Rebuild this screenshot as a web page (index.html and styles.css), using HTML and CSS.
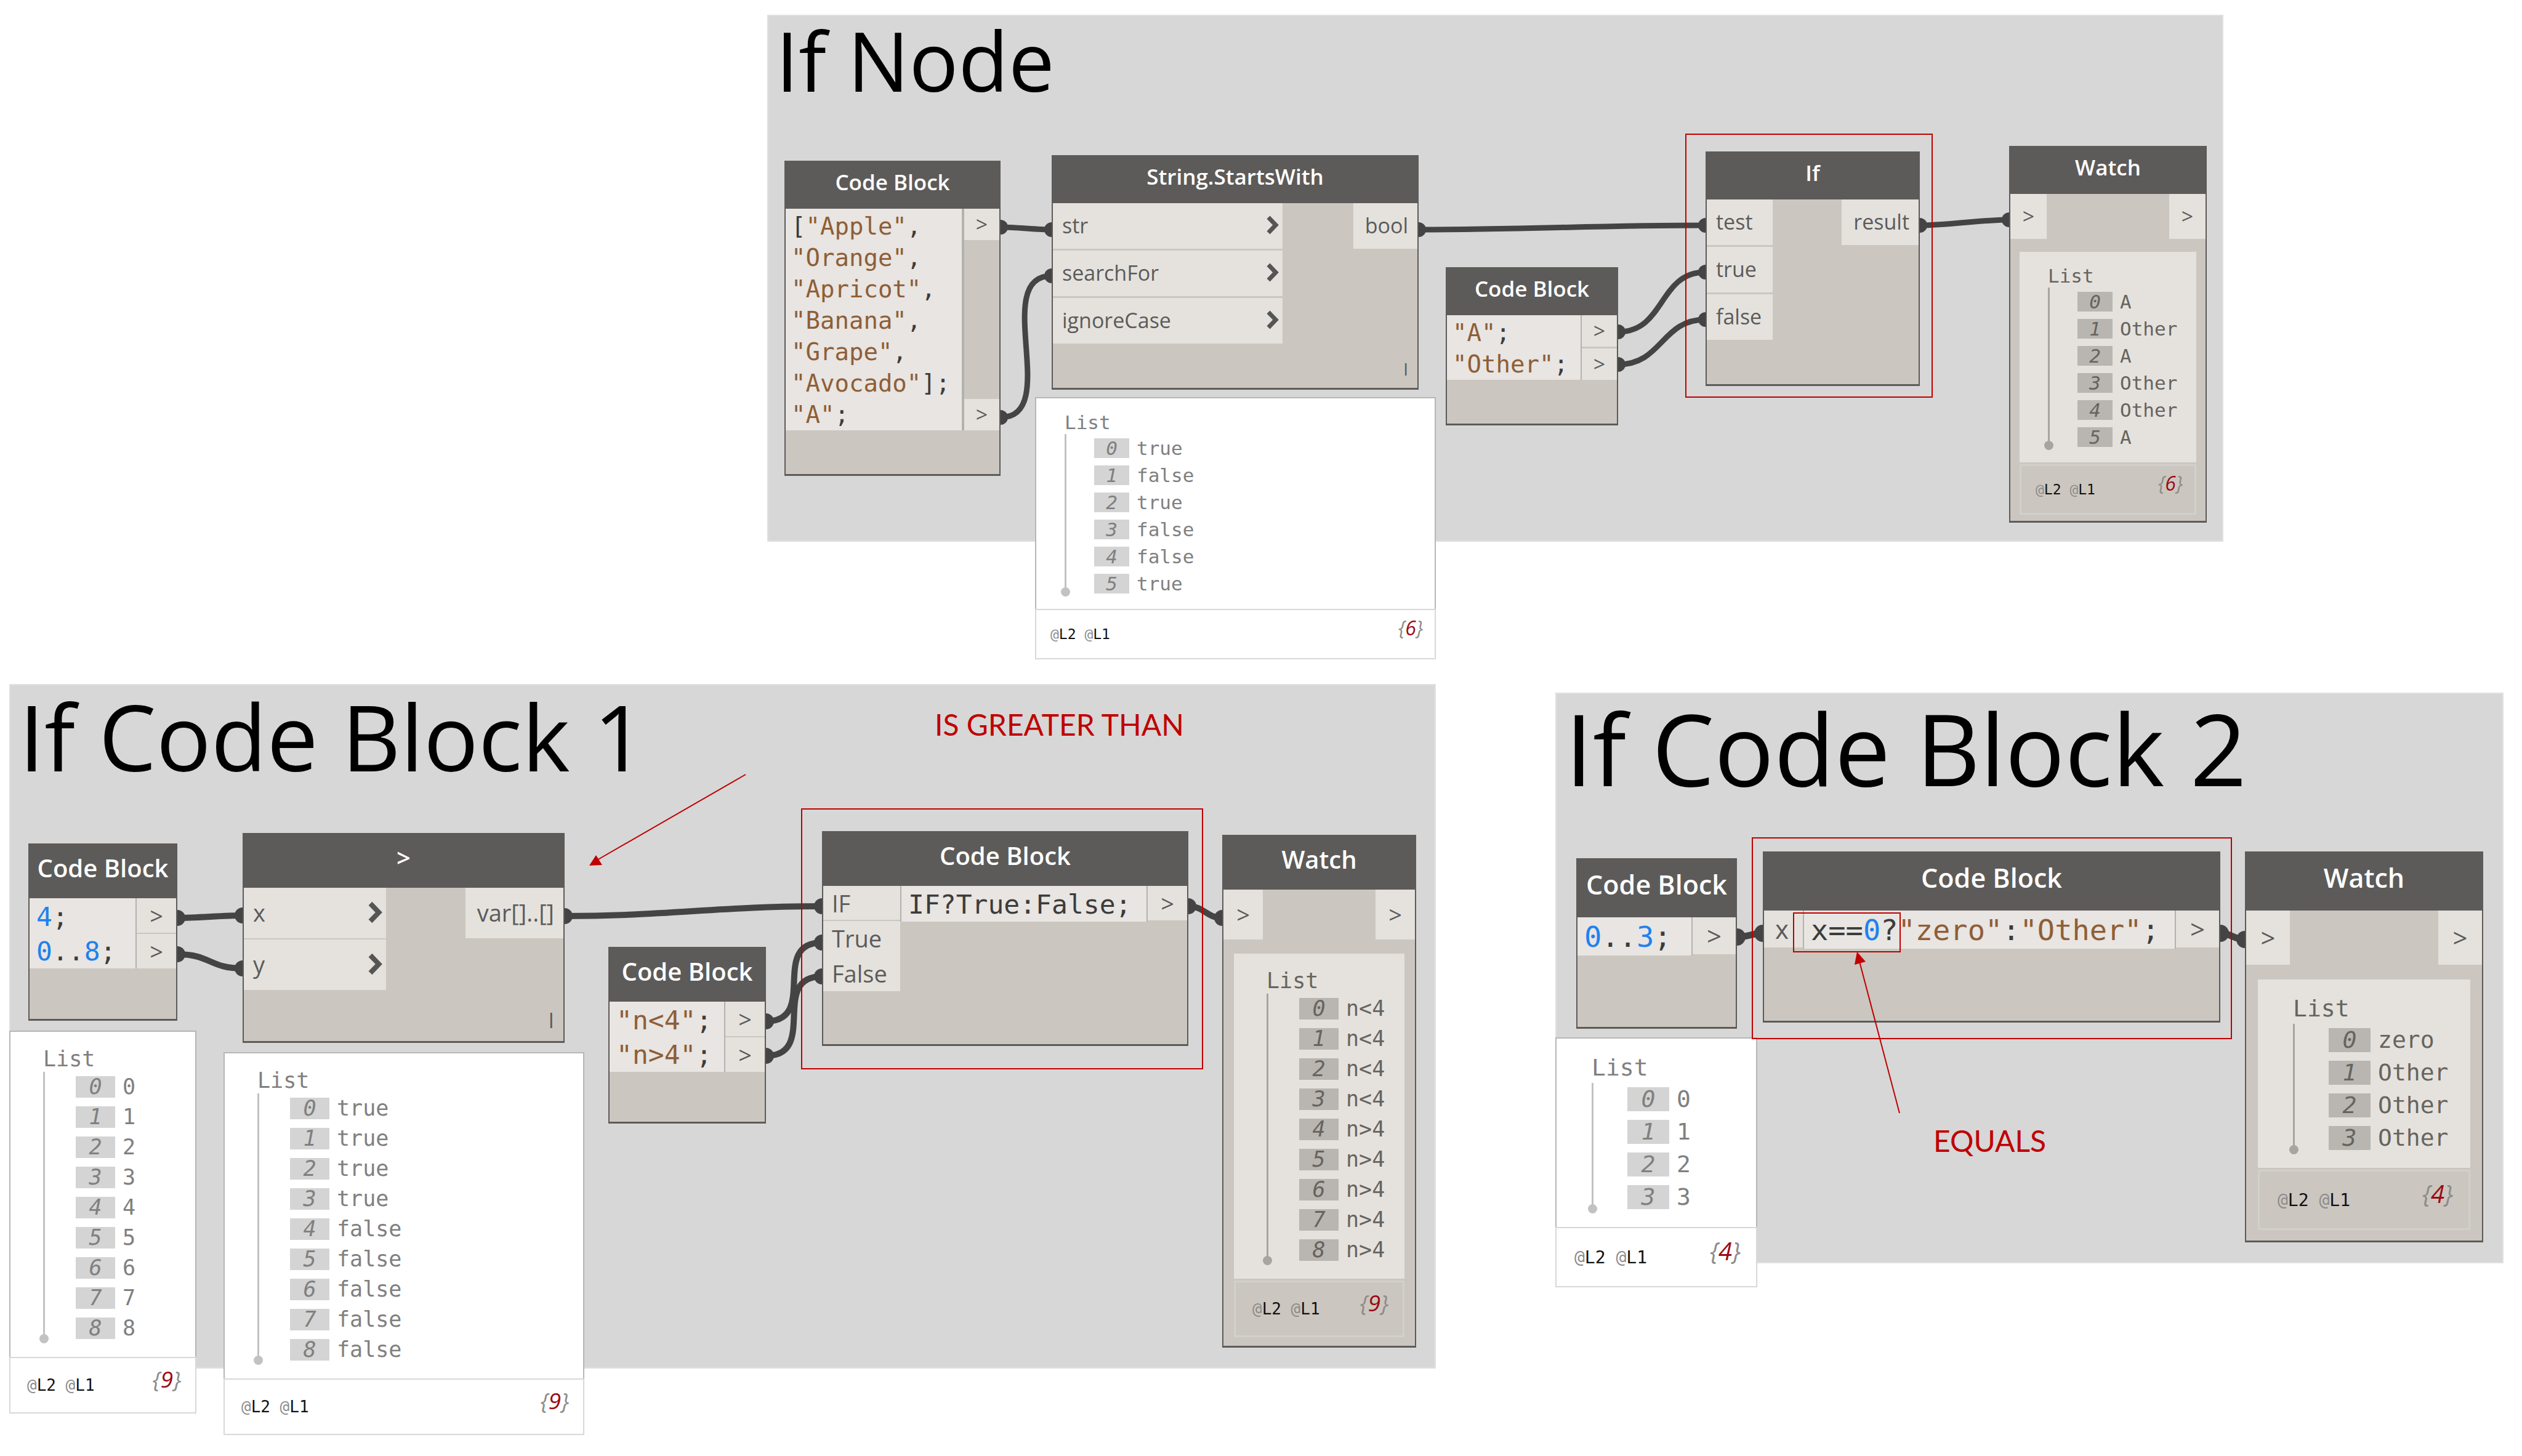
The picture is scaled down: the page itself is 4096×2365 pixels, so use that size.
FILE: index.html
```html
<!DOCTYPE html>
<html lang="en">
<head>
<meta charset="utf-8">
<title>If Node and Code Block graphs</title>
<link rel="stylesheet" href="styles.css">
</head>
<body>
<main class="canvas">

  <section class="group group-node scale-s"><h1 class="group-title">If Node</h1></section>
  <section class="group group-block1 scale-m"><h1 class="group-title">If Code Block 1</h1></section>
  <section class="group group-block2 scale-l"><h1 class="group-title">If Code Block 2</h1></section>

  <svg class="layer wires" aria-hidden="true">
    <g stroke-width="9">
      <path d="M1625 369C1650 369 1683 373 1708 373"/>
      <path d="M1625 678C1725 678 1608 448 1708 448"/>
      <path d="M2304 373C2480 373 2590 366 2770 366"/>
      <path d="M2628 539C2705 539 2693 442 2770 442"/>
      <path d="M2628 592C2700 592 2698 519 2770 519"/>
      <path d="M3118 366C3165 366 3215 357 3263 357"/>
    </g>
    <g stroke-width="10">
      <path d="M288 1491C322 1491 360 1487 394 1487"/>
      <path d="M288 1550C342 1550 340 1573 394 1573"/>
      <path d="M917 1488C1080 1488 1170 1472 1335 1472"/>
      <path d="M1244 1659C1330 1659 1249 1531 1335 1531"/>
      <path d="M1244 1715C1330 1715 1249 1586 1335 1586"/>
      <path d="M1930 1472C1955 1472 1960 1491 1985 1491"/>
    </g>
    <g stroke-width="11">
      <path d="M2821 1522C2838 1522 2846 1516 2863 1516"/>
      <path d="M3606 1516C3624 1516 3628 1526 3646 1526"/>
    </g>
    <g class="ends">
      <circle cx="1625" cy="369" r="12"/><circle cx="1708" cy="373" r="12"/>
      <circle cx="1625" cy="678" r="12"/><circle cx="1708" cy="448" r="12"/>
      <circle cx="2304" cy="373" r="12"/><circle cx="2770" cy="366" r="12"/>
      <circle cx="2628" cy="539" r="12"/><circle cx="2770" cy="442" r="12"/>
      <circle cx="2628" cy="592" r="12"/><circle cx="2770" cy="519" r="12"/>
      <circle cx="3118" cy="366" r="12"/><circle cx="3263" cy="357" r="12"/>
      <circle cx="288" cy="1491" r="13"/><circle cx="394" cy="1487" r="13"/>
      <circle cx="288" cy="1550" r="13"/><circle cx="394" cy="1573" r="13"/>
      <circle cx="917" cy="1488" r="13"/><circle cx="1335" cy="1472" r="13"/>
      <circle cx="1244" cy="1659" r="13"/><circle cx="1335" cy="1531" r="13"/>
      <circle cx="1244" cy="1715" r="13"/><circle cx="1335" cy="1586" r="13"/>
      <circle cx="1930" cy="1472" r="13"/><circle cx="1985" cy="1491" r="13"/>
      <circle cx="2821" cy="1522" r="14"/><circle cx="2863" cy="1516" r="14"/>
      <circle cx="3606" cy="1516" r="14"/><circle cx="3646" cy="1526" r="14"/>
    </g>
  </svg>

  <!-- If Node graph -->
  <article class="node node-fruit scale-s">
    <h2 class="node-head">Code Block</h2>
    <div class="node-body">
      <pre class="code code-wide"><code>[<i>"Apple"</i>,
<i>"Orange"</i>,
<i>"Apricot"</i>,
<i>"Banana"</i>,
<i>"Grape"</i>,
<i>"Avocado"</i>];
<i>"A"</i>;</code></pre>
      <div class="outs"><span class="pin">&gt;</span><span class="pin">&gt;</span></div>
    </div>
  </article>

  <article class="node node-starts scale-s">
    <h2 class="node-head">String.StartsWith</h2>
    <div class="node-body">
      <ul class="ins">
        <li class="port">str<svg class="chevron" viewBox="0 0 20 31"><path d="M3 3L15 15.500L3 28"/></svg></li>
        <li class="port">searchFor<svg class="chevron" viewBox="0 0 20 31"><path d="M3 3L15 15.500L3 28"/></svg></li>
        <li class="port">ignoreCase<svg class="chevron" viewBox="0 0 20 31"><path d="M3 3L15 15.500L3 28"/></svg></li>
      </ul>
      <span class="port out">bool</span>
    </div>
    <span class="lacing">I</span>
  </article>

  <article class="preview preview-starts scale-s">
    <div class="tree">
      <p class="tree-head">List</p>
      <div class="branch"><span class="rail"></span>
        <ul class="items">
          <li><i>0</i>true</li><li><i>1</i>false</li><li><i>2</i>true</li>
          <li><i>3</i>false</li><li><i>4</i>false</li><li><i>5</i>true</li>
        </ul>
      </div>
    </div>
    <footer class="levels"><span>@<b>L2</b> @<b>L1</b></span><em class="count">{<b>6</b>}</em></footer>
  </article>

  <article class="node node-other scale-s">
    <h2 class="node-head">Code Block</h2>
    <div class="node-body">
      <pre class="code"><code><i>"A"</i>;
<i>"Other"</i>;</code></pre>
      <div class="outs"><span class="pin">&gt;</span><span class="pin">&gt;</span></div>
    </div>
  </article>

  <article class="node node-if scale-s">
    <h2 class="node-head">If</h2>
    <div class="node-body">
      <ul class="ins">
        <li class="port">test</li>
        <li class="port">true</li>
        <li class="port">false</li>
      </ul>
      <span class="port out">result</span>
    </div>
  </article>

  <article class="node watch watch-s scale-s">
    <h2 class="node-head">Watch</h2>
    <div class="node-body"><span class="pin">&gt;</span><span class="pin">&gt;</span></div>
    <div class="tree">
      <p class="tree-head">List</p>
      <div class="branch"><span class="rail"></span>
        <ul class="items">
          <li><i>0</i>A</li><li><i>1</i>Other</li><li><i>2</i>A</li>
          <li><i>3</i>Other</li><li><i>4</i>Other</li><li><i>5</i>A</li>
        </ul>
      </div>
    </div>
    <footer class="levels"><span>@<b>L2</b> @<b>L1</b></span><em class="count">{<b>6</b>}</em></footer>
  </article>

  <!-- If Code Block 1 graph -->
  <article class="node node-range8 scale-m">
    <h2 class="node-head">Code Block</h2>
    <div class="node-body">
      <pre class="code"><code><b>4</b>;
<b>0</b>..<b>8</b>;</code></pre>
      <div class="outs"><span class="pin">&gt;</span><span class="pin">&gt;</span></div>
    </div>
  </article>

  <article class="preview preview-range8 scale-m">
    <div class="tree">
      <p class="tree-head">List</p>
      <div class="branch"><span class="rail"></span>
        <ul class="items">
          <li><i>0</i>0</li><li><i>1</i>1</li><li><i>2</i>2</li>
          <li><i>3</i>3</li><li><i>4</i>4</li><li><i>5</i>5</li>
          <li><i>6</i>6</li><li><i>7</i>7</li><li><i>8</i>8</li>
        </ul>
      </div>
    </div>
    <footer class="levels"><span>@<b>L2</b> @<b>L1</b></span><em class="count">{<b>9</b>}</em></footer>
  </article>

  <article class="node node-greater scale-m">
    <h2 class="node-head">&gt;</h2>
    <div class="node-body">
      <ul class="ins">
        <li class="port">x<svg class="chevron" viewBox="0 0 20 31"><path d="M3 3L15 15.500L3 28"/></svg></li>
        <li class="port">y<svg class="chevron" viewBox="0 0 20 31"><path d="M3 3L15 15.500L3 28"/></svg></li>
      </ul>
      <span class="port out">var[]..[]</span>
    </div>
    <span class="lacing">I</span>
  </article>

  <article class="preview preview-greater scale-m">
    <div class="tree">
      <p class="tree-head">List</p>
      <div class="branch"><span class="rail"></span>
        <ul class="items">
          <li><i>0</i>true</li><li><i>1</i>true</li><li><i>2</i>true</li>
          <li><i>3</i>true</li><li><i>4</i>false</li><li><i>5</i>false</li>
          <li><i>6</i>false</li><li><i>7</i>false</li><li><i>8</i>false</li>
        </ul>
      </div>
    </div>
    <footer class="levels"><span>@<b>L2</b> @<b>L1</b></span><em class="count">{<b>9</b>}</em></footer>
  </article>

  <article class="node node-n4 scale-m">
    <h2 class="node-head">Code Block</h2>
    <div class="node-body">
      <pre class="code"><code><i>"n&lt;4"</i>;
<i>"n&gt;4"</i>;</code></pre>
      <div class="outs"><span class="pin">&gt;</span><span class="pin">&gt;</span></div>
    </div>
  </article>

  <article class="node node-ternary scale-m">
    <h2 class="node-head">Code Block</h2>
    <div class="node-body">
      <ul class="names">
        <li>IF</li>
        <li>True</li>
        <li>False</li>
      </ul>
      <pre class="code code-inner"><code>IF?True:False;</code></pre>
      <div class="outs"><span class="pin">&gt;</span></div>
    </div>
  </article>

  <article class="node watch watch-m scale-m">
    <h2 class="node-head">Watch</h2>
    <div class="node-body"><span class="pin">&gt;</span><span class="pin">&gt;</span></div>
    <div class="tree">
      <p class="tree-head">List</p>
      <div class="branch"><span class="rail"></span>
        <ul class="items">
          <li><i>0</i>n&lt;4</li><li><i>1</i>n&lt;4</li><li><i>2</i>n&lt;4</li>
          <li><i>3</i>n&lt;4</li><li><i>4</i>n&gt;4</li><li><i>5</i>n&gt;4</li>
          <li><i>6</i>n&gt;4</li><li><i>7</i>n&gt;4</li><li><i>8</i>n&gt;4</li>
        </ul>
      </div>
    </div>
    <footer class="levels"><span>@<b>L2</b> @<b>L1</b></span><em class="count">{<b>9</b>}</em></footer>
  </article>

  <!-- If Code Block 2 graph -->
  <article class="node node-range3 scale-l">
    <h2 class="node-head">Code Block</h2>
    <div class="node-body">
      <pre class="code"><code><b>0</b>..<b>3</b>;</code></pre>
      <div class="outs"><span class="pin">&gt;</span></div>
    </div>
  </article>

  <article class="preview preview-range3 scale-l">
    <div class="tree">
      <p class="tree-head">List</p>
      <div class="branch"><span class="rail"></span>
        <ul class="items">
          <li><i>0</i>0</li><li><i>1</i>1</li><li><i>2</i>2</li><li><i>3</i>3</li>
        </ul>
      </div>
    </div>
    <footer class="levels"><span>@<b>L2</b> @<b>L1</b></span><em class="count">{<b>4</b>}</em></footer>
  </article>

  <article class="node node-equals scale-l">
    <h2 class="node-head">Code Block</h2>
    <div class="node-body">
      <ul class="names">
        <li>x</li>
      </ul>
      <pre class="code code-inner"><code>x==<b>0</b>?<i>"zero"</i>:<i>"Other"</i>;</code></pre>
      <div class="outs"><span class="pin">&gt;</span></div>
    </div>
  </article>

  <article class="node watch watch-l scale-l">
    <h2 class="node-head">Watch</h2>
    <div class="node-body"><span class="pin">&gt;</span><span class="pin">&gt;</span></div>
    <div class="tree">
      <p class="tree-head">List</p>
      <div class="branch"><span class="rail"></span>
        <ul class="items">
          <li><i>0</i>zero</li><li><i>1</i>Other</li><li><i>2</i>Other</li><li><i>3</i>Other</li>
        </ul>
      </div>
    </div>
    <footer class="levels"><span>@<b>L2</b> @<b>L1</b></span><em class="count">{<b>4</b>}</em></footer>
  </article>

  <!-- Red call-outs -->
  <svg class="layer marks" aria-hidden="true">
    <rect x="2738" y="218" width="400" height="427"/>
    <rect x="1302" y="1314" width="651" height="422"/>
    <rect x="2846" y="1361" width="778" height="326"/>
    <rect x="2913" y="1483" width="173" height="63"/>
    <path d="M1211 1258L968 1398"/>
    <path class="tip" d="M957 1406L968 1389L978 1405Z"/>
    <path d="M3085 1808L3020 1562"/>
    <path class="tip" d="M3016 1546L3030 1562L3012 1567Z"/>
  </svg>
  <p class="note note-greater">IS GREATER THAN</p>
  <p class="note note-equals">EQUALS</p>
</main>
</body>
</html>
```
FILE: styles.css
```css
* { box-sizing: border-box; }

body {
  margin: 0;
  background: #fff;
  color: #5b5b5b;
  font-family: "Open Sans", "Noto Sans", sans-serif;
}

h1, h2, p, ul, pre { margin: 0; padding: 0; font-weight: 400; }
ul { list-style: none; }

.canvas {
  position: relative;
  min-height: 100vh;
  overflow: hidden;
}

/* The three graphs were drawn at three zoom levels */
.scale-s {
  --title: 35px; --head-line: 66px; --head-pad: 10px;
  --label: 34px; --row: 74px; --row-gap: 3px;
  --code: 39px; --line: 51px; --code-top: 3px; --code-pad: 9px; --pin: 57px;
  --list: 31px; --box: 32px; --box-gap: 12px; --box-w: 57px;
  --tree-top: 23px; --tree-left: 46px; --head-gap: 10px; --items-left: 45px; --tree-end: 13px;
  --level: 23px; --level-h: 82px; --level-pad: 23px; --count: 32px;
  --side: 15px; --drop: 21px; --watch-pin: 59px; --watch-row: 73px;
}
.scale-m {
  --title: 40px; --head-line: 76px; --head-pad: 11px;
  --label: 38px; --row: 82px; --row-gap: 2px;
  --code: 43px; --line: 56px; --code-top: 2px; --code-pad: 11px; --pin: 64px;
  --list: 35px; --box: 35px; --box-gap: 14px; --box-w: 64px;
  --tree-top: 27px; --tree-left: 53px; --head-gap: 10px; --items-left: 50px; --tree-end: 15px;
  --level: 26px; --level-h: 92px; --level-pad: 27px; --count: 37px;
  --side: 17px; --drop: 23px; --watch-pin: 64px; --watch-row: 81px;
}
.scale-l {
  --title: 43px; --head-line: 82px; --head-pad: 12px;
  --label: 42px; --row: 88px; --row-gap: 2px;
  --code: 47px; --line: 60px; --code-top: 2px; --code-pad: 11px; --pin: 70px;
  --list: 38px; --box: 39px; --box-gap: 14px; --box-w: 68px;
  --tree-top: 28px; --tree-left: 57px; --head-gap: 12px; --items-left: 55px; --tree-end: 15px;
  --level: 28px; --level-h: 98px; --level-pad: 29px; --count: 40px;
  --side: 19px; --drop: 24px; --watch-pin: 71px; --watch-row: 88px;
}

/* Groups */
.group {
  position: absolute;
  background: #d7d7d7;
  border: 2px solid #e0e0e0;
}
.group-title { padding-left: 12px; color: #000; white-space: nowrap; }
.group-node { left: 1246px; top: 24px; width: 2365px; height: 856px; }
.group-block1 { left: 15px; top: 1111px; width: 2317px; height: 1112px; }
.group-block2 { left: 2526px; top: 1125px; width: 1540px; height: 927px; }
.group-node .group-title { font-size: 133px; line-height: 144px; }
.group-block1 .group-title { padding-left: 14px; font-size: 148px; line-height: 166px; }
.group-block2 .group-title { padding-left: 14px; font-size: 161px; line-height: 176px; }

/* Full-canvas drawings */
.layer {
  position: absolute;
  left: 0;
  top: 0;
  width: 100%;
  height: 100%;
  pointer-events: none;
}
.wires path { fill: none; stroke: #444; }
.wires .ends { fill: #444; }
.marks { fill: none; stroke: #c00000; stroke-width: 2px; }
.marks .tip { fill: #c00000; stroke: none; }

/* Nodes */
.node {
  position: absolute;
  display: flex;
  flex-direction: column;
  background: #cbc6bf;
  border: 2px solid #5d5b59;
  border-bottom-width: 3px;
}
.node-head {
  padding-bottom: var(--head-pad);
  background: #5d5b59;
  color: #fff;
  font-size: var(--title);
  font-weight: 600;
  line-height: var(--head-line);
  text-align: center;
  white-space: nowrap;
}
.node-body { display: flex; justify-content: space-between; align-items: flex-start; }

.code {
  flex: 1;
  padding: var(--code-top) 0 0 var(--code-pad);
  border-right: 2px solid #b4b2af;
  background: #e8e5e2;
  color: #3c3c3c;
  font-family: "DejaVu Sans Mono", monospace;
  font-size: var(--code);
  line-height: var(--line);
}
.code code { font: inherit; }
.code i { color: #8f5e36; font-style: normal; }
.code b { color: #1e82ee; font-weight: 400; }
.code-wide { border-right-width: 4px; }
.code-inner { border-left: 2px solid #b4b2af; }

.outs {
  display: flex;
  flex-direction: column;
  justify-content: space-between;
  align-self: stretch;
}
.pin {
  width: var(--pin);
  height: var(--line);
  background: #e5e2dd;
  font-size: var(--label);
  line-height: var(--line);
  text-align: center;
}

.ins { display: flex; flex-direction: column; gap: var(--row-gap); }
.port {
  display: flex;
  align-items: center;
  justify-content: space-between;
  height: var(--row);
  padding: 0 6px 3px 15px;
  background: #e5e2dd;
  font-size: var(--label);
}
.out { padding: 0 15px 3px 19px; }
.chevron { width: 20px; height: 31px; }
.chevron path { fill: none; stroke: #555; stroke-width: 7; }
.scale-m .chevron { width: 23px; height: 36px; }

.names { background: #e5e2dd; font-size: var(--label); line-height: 57px; }
.names li { height: 57px; padding-left: 14px; }
.node-ternary .names { width: 125px; }
.node-ternary .names li:first-child { border-bottom: 2px solid #cbc6bf; }
.node-equals .names { width: 63px; line-height: 60px; }
.node-equals .names li { height: 60px; padding-left: 18px; }

.lacing {
  align-self: flex-end;
  margin-top: auto;
  padding: 0 15px 17px 0;
  font-size: 28px;
  line-height: 28px;
}
.scale-m .lacing { font-size: 34px; line-height: 34px; }

/* List trees */
.tree {
  padding: var(--tree-top) 0 var(--tree-end) var(--tree-left);
  font-family: "DejaVu Sans Mono", monospace;
  font-size: var(--list);
  line-height: var(--box);
}
.tree-head { margin-bottom: var(--head-gap); }
.branch { display: flex; gap: var(--items-left); }
.rail {
  position: relative;
  width: 3px;
  margin: -7px 0 15px;
  background: #c2c2c2;
}
.rail::after {
  content: "";
  position: absolute;
  left: -6px;
  bottom: -8px;
  width: 15px;
  height: 15px;
  border-radius: 50%;
  background: inherit;
}
.items li { display: flex; gap: 12px; margin-bottom: var(--box-gap); white-space: nowrap; }
.items i { width: var(--box-w); background: #d4d4d4; text-align: center; }

.levels {
  display: flex;
  align-items: center;
  justify-content: space-between;
  height: var(--level-h);
  padding: 0 var(--level-pad);
  border: 2px solid #d8d8d8;
  color: #8c8c8c;
  font-family: "DejaVu Sans Mono", monospace;
  font-size: var(--level);
}
.levels b { color: #111; font-weight: 400; }
.count {
  margin-right: -4px;
  padding-bottom: 22px;
  font-family: "Open Sans", "Noto Sans", sans-serif;
  font-size: var(--count);
}
.levels .count b { color: #9c0a12; }

/* Preview bubbles under the nodes */
.preview { position: absolute; background: #fff; color: #808080; }
.preview .tree { border: 2px solid #b6b6b6; border-bottom: 0; }

/* Watch nodes */
.watch .pin { width: var(--watch-pin); height: var(--watch-row); line-height: var(--watch-row); }
.watch .tree {
  margin: var(--drop) var(--side) 3px;
  background: #e5e2dd;
  color: #67645f;
}
.watch .rail { background: #a8a5a0; }
.watch .items i { background: #b9b6b1; }
.watch .levels { margin: 0 var(--side); border: 3px solid #d1d0cd; }

/* Places on the canvas */
.node-fruit { left: 1274px; top: 261px; width: 351px; height: 512px; }
.node-starts { left: 1708px; top: 252px; width: 596px; height: 381px; }
.node-starts .ins { width: 373px; }
.preview-starts { left: 1681px; top: 645px; width: 651px; }
.node-other { left: 2348px; top: 434px; width: 280px; height: 257px; }
.node-if { left: 2770px; top: 246px; width: 348px; height: 381px; }
.node-if .ins { width: 107px; }
.watch-s { left: 3263px; top: 237px; width: 321px; height: 612px; }

.node-range8 { left: 46px; top: 1370px; width: 242px; height: 288px; }
.preview-range8 { left: 15px; top: 1674px; width: 304px; }
.node-greater { left: 394px; top: 1353px; width: 523px; height: 341px; }
.node-greater .ins { width: 231px; }
.preview-greater { left: 363px; top: 1709px; width: 586px; }
.node-n4 { left: 988px; top: 1538px; width: 256px; height: 287px; }
.node-ternary { left: 1335px; top: 1350px; width: 595px; height: 349px; }
.watch-m { left: 1985px; top: 1356px; width: 315px; height: 833px; }

.node-range3 { left: 2560px; top: 1394px; width: 261px; height: 277px; }
.preview-range3 { left: 2526px; top: 1685px; width: 328px; }
.node-equals { left: 2863px; top: 1383px; width: 743px; height: 278px; }
.watch-l { left: 3646px; top: 1383px; width: 387px; height: 635px; }

.note {
  position: absolute;
  color: #c00000;
  font-family: Lato, "Open Sans", sans-serif;
  font-size: 48px;
  line-height: 58px;
  white-space: nowrap;
}
.note-greater { left: 1518px; top: 1148px; }
.note-equals { left: 3140px; top: 1824px; }
```
